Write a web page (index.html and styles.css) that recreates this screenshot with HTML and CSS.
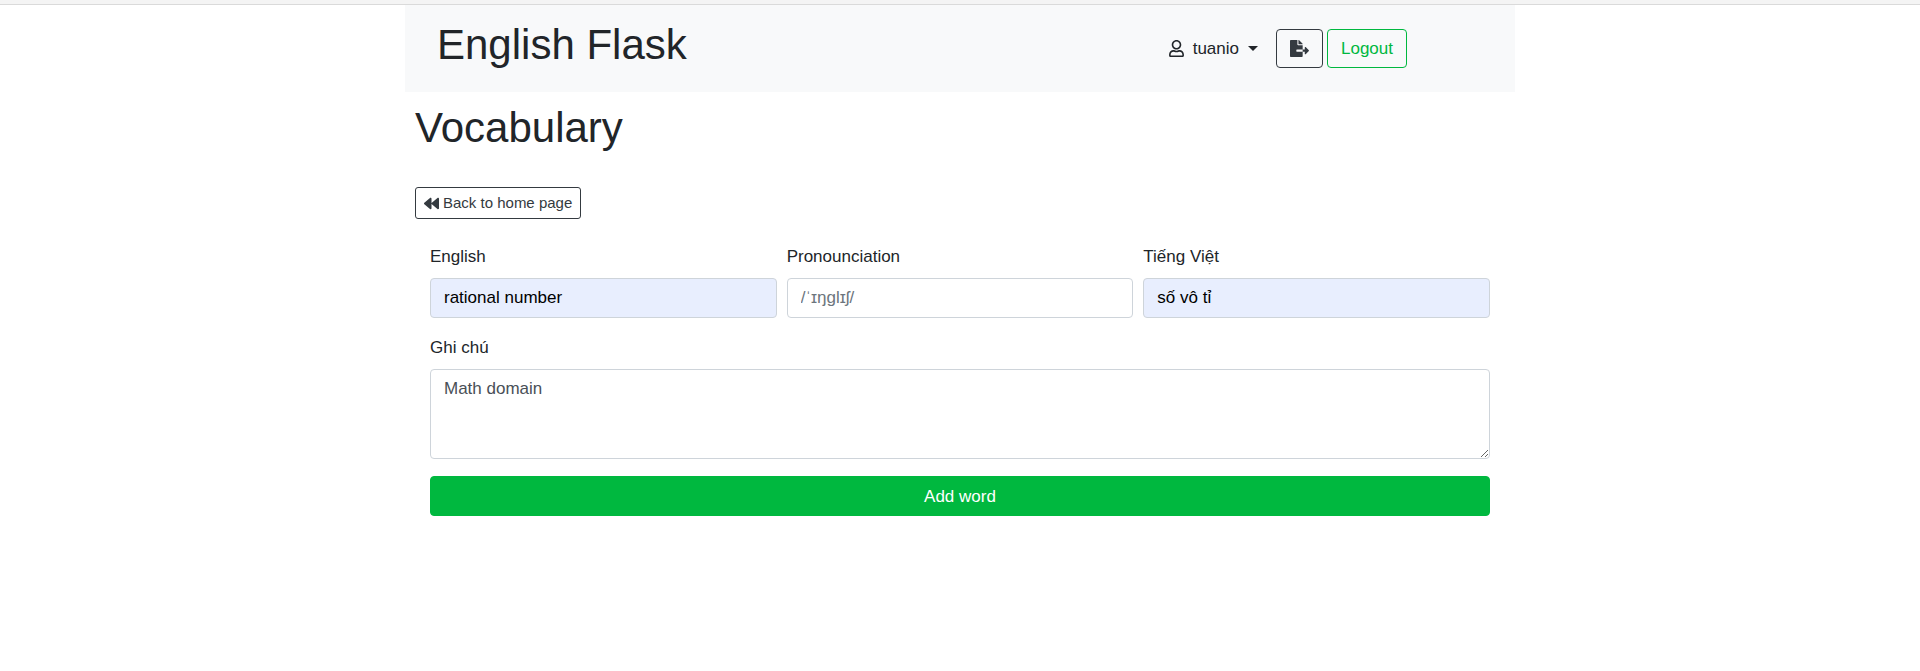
FILE: index.html
```
<!DOCTYPE html>
<html lang="vi">
<head>
<meta charset="utf-8">
<title>English Flask</title>
<link rel="stylesheet" href="styles.css">
</head>
<body>
<div class="top-strip"></div>
<div class="container">
  <header class="navbar">
    <h1 class="title">English Flask</h1>
    <nav class="nav-actions">
      <button type="button" class="user-menu">
        <svg class="icon-user" viewBox="0 0 448 512" aria-hidden="true"><path d="M313.6 304c-28.7 0-42.5 16-89.6 16-47.1 0-60.8-16-89.6-16C60.2 304 0 364.2 0 438.4V464c0 26.5 21.5 48 48 48h352c26.5 0 48-21.5 48-48v-25.6c0-74.2-60.2-134.4-134.4-134.4zM400 464H48v-25.6c0-47.6 38.8-86.4 86.4-86.4 14.6 0 38.3 16 89.6 16 51.7 0 74.9-16 89.6-16 47.6 0 86.4 38.8 86.4 86.4V464zM224 288c79.5 0 144-64.5 144-144S303.5 0 224 0 80 64.5 80 144s64.5 144 144 144zm0-240c52.9 0 96 43.1 96 96s-43.1 96-96 96-96-43.1-96-96 43.1-96 96-96z"/></svg>
        <span>tuanio</span>
        <span class="caret"></span>
      </button>
      <div class="nav-buttons">
        <button type="button" class="btn btn-dark" aria-label="Export">
          <svg class="icon-export" viewBox="0 0 576 512" aria-hidden="true"><path d="M384 121.9c0-6.3-2.5-12.4-7-16.9L279.1 7c-4.5-4.5-10.6-7-17-7H256v128h128zM571 308l-95.7-96.4c-10.1-10.1-27.4-3-27.4 11.3V288h-64v64h64v65.2c0 14.3 17.3 21.4 27.4 11.3L571 332c6.6-6.6 6.6-17.4 0-24zm-379 28v-32c0-8.8 7.2-16 16-16h176V160H248c-13.2 0-24-10.8-24-24V0H24C10.7 0 0 10.7 0 24v464c0 13.3 10.7 24 24 24h336c13.3 0 24-10.7 24-24V352H208c-8.8 0-16-7.2-16-16z"/></svg>
        </button>
        <a class="btn btn-green" href="#logout">Logout</a>
      </div>
    </nav>
  </header>
  <main class="content">
    <h1 class="title">Vocabulary</h1>
    <a class="btn btn-dark btn-small back" href="#home">
      <svg class="icon-back" viewBox="0 0 512 512" aria-hidden="true"><path d="M11.5 280.6l192 160c20.6 17.2 52.5 2.8 52.5-24.6V96c0-27.4-31.9-41.8-52.5-24.6l-192 160c-15.3 12.8-15.3 36.4 0 49.2zm256 0l192 160c20.6 17.2 52.5 2.8 52.5-24.6V96c0-27.4-31.9-41.8-52.5-24.6l-192 160c-15.3 12.8-15.3 36.4 0 49.2z"/></svg>
      Back to home page
    </a>
    <form class="word-form">
      <div class="row">
        <div class="field">
          <label for="english">English</label>
          <input class="control filled" id="english" type="text" value="rational number">
        </div>
        <div class="field">
          <label for="pron">Pronounciation</label>
          <input class="control" id="pron" type="text" placeholder="/ˈɪŋglɪʃ/">
        </div>
        <div class="field">
          <label for="viet">Tiếng Việt</label>
          <input class="control filled" id="viet" type="text" value="số vô tỉ">
        </div>
      </div>
      <div class="field">
        <label for="note">Ghi chú</label>
        <textarea class="control note" id="note" rows="3">Math domain</textarea>
      </div>
      <button type="button" class="btn btn-submit">Add word</button>
    </form>
  </main>
</div>
</body>
</html>
```
FILE: styles.css
```
* {
  box-sizing: border-box;
}

body {
  margin: 0;
  background: #fff;
  color: #212529;
  font-family: "Liberation Sans", Arial, sans-serif;
  font-size: 17px;
  line-height: 25px;
}

.top-strip {
  height: 5px;
  background: #f4f4f4;
  border-bottom: 1px solid #dadada;
}

.container {
  max-width: 1110px;
  margin: 0 auto;
}

.title {
  margin: 0;
  font-size: 42px;
  font-weight: 500;
  line-height: 51px;
}

.navbar {
  display: flex;
  justify-content: space-between;
  align-items: flex-start;
  padding: 14px 108px 22px 32px;
  background: #f8f9fa;
}

.nav-actions {
  display: flex;
  align-items: center;
  gap: 18px;
  padding-top: 10px;
}

.nav-buttons {
  display: flex;
  gap: 4px;
}

.user-menu {
  display: flex;
  align-items: center;
  gap: 9px;
  padding: 0;
  border: 0;
  background: none;
  color: inherit;
  font: inherit;
}

.caret {
  border: 5px solid transparent;
  border-top-color: currentColor;
  border-bottom: 0;
}

svg {
  display: block;
  fill: currentColor;
}

.icon-user {
  width: 15px;
  height: 17px;
}

.icon-export {
  width: 19px;
  height: 17px;
}

.icon-back {
  width: 15px;
  height: 15px;
}

.btn {
  display: flex;
  align-items: center;
  justify-content: center;
  height: 39px;
  padding: 0 13px;
  border: 1px solid;
  border-radius: 4px;
  background: none;
  font: inherit;
  text-decoration: none;
}

.btn-dark {
  color: #343a40;
}

.btn-green {
  color: #00b83f;
}

.btn-small {
  height: 32px;
  gap: 4px;
  padding: 0 8px;
  border-radius: 3px;
  font-size: 15px;
  line-height: 24px;
}

.content {
  padding: 10px 10px 0;
}

.back {
  width: fit-content;
  margin-top: 34px;
}

.word-form {
  display: flex;
  flex-direction: column;
  gap: 17px;
  padding: 25px 15px 0;
}

.row {
  display: grid;
  grid-template-columns: repeat(3, 1fr);
  gap: 10px;
}

.field {
  display: flex;
  flex-direction: column;
  gap: 9px;
}

.control {
  width: 100%;
  height: 40px;
  margin: 0;
  padding: 6px 13px;
  border: 1px solid #ced4da;
  border-radius: 4px;
  background: #fff;
  color: #495057;
  font: inherit;
}

.control::placeholder {
  color: #6c757d;
  opacity: 1;
}

.filled {
  background: #e8eefe;
  color: #000;
}

.note {
  height: 90px;
  resize: vertical;
}

.btn-submit {
  height: 40px;
  border-color: #00b83f;
  background: #00b83f;
  color: #fff;
}
```
